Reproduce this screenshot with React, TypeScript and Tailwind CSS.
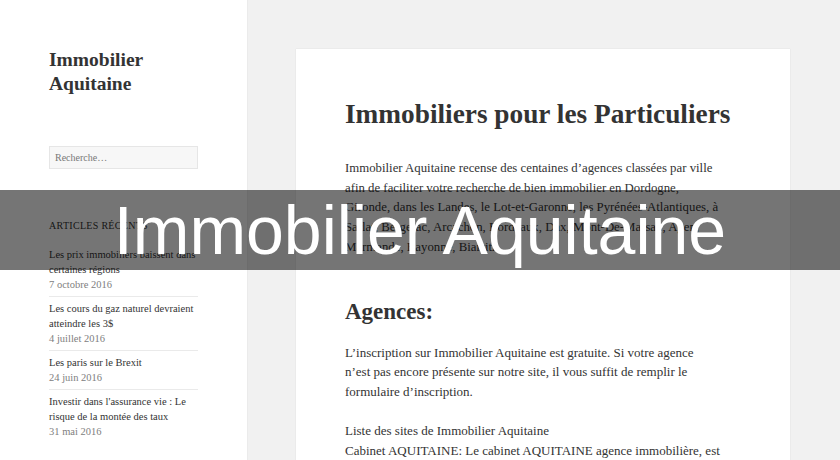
import React from "react";

const serif = { fontFamily: '"Liberation Serif", "DejaVu Serif", serif' };

const posts = [
  { t: ["Les prix immobiliers baissent dans", "certaines régions"], d: "7 octobre 2016" },
  { t: ["Les cours du gaz naturel devraient", "atteindre les 3$"], d: "4 juillet 2016" },
  { t: ["Les paris sur le Brexit"], d: "24 juin 2016" },
  { t: ["Investir dans l'assurance vie : Le", "risque de la montée des taux"], d: "31 mai 2016" },
];

export default function App() {
  return (
    <div className="relative w-[840px] h-[460px] overflow-hidden bg-[#f1f1f1] flex" style={serif}>
      <aside className="w-[247px] shrink-0 h-full bg-white shadow-[0_0_1px_rgba(0,0,0,0.15)] pl-[49px] pr-[49px] pt-[48px]">
        <div className="text-[19.5px] leading-[24px] font-bold text-[#333]">
          Immobilier
          <br />
          Aquitaine
        </div>
        <div className="mt-[50px] h-[23px] w-[149px] border border-[#e6e6e6] bg-[#f7f7f7] text-[10px] text-[#777] pl-[5px] leading-[21px]">
          Recherche…
        </div>
        <div className="mt-[50px] text-[10px] tracking-[0.3px] text-[#333] leading-[14px]">ARTICLES RÉCENTS</div>
        <ul className="mt-[14px] w-[149px]">
          {posts.map((p, i) => (
            <li key={i} className={`text-[10.5px] leading-[15px] ${i < posts.length - 1 ? "border-b border-[#eaeaea] pb-[4px] mb-[4px]" : ""}`}>
              {p.t.map((l, j) => (
                <div key={j} className="text-[#333] whitespace-nowrap">{l}</div>
              ))}
              <div className="text-[#808080]">{p.d}</div>
            </li>
          ))}
        </ul>
      </aside>
      <main className="flex-1 pl-[49px] pt-[49px]">
        <article className="w-[494px] h-[460px] bg-white shadow-[0_0_1px_rgba(0,0,0,0.15)] pl-[49px] pt-[49px]">
          <h1 className="text-[27.3px] leading-[32px] font-bold text-[#333]">Immobiliers pour les Particuliers</h1>
          <p className="mt-[29px] text-[12.8px] leading-[19.7px] text-[#333] whitespace-nowrap">
            Immobilier Aquitaine recense des centaines d’agences classées par ville
            <br />
            afin de faciliter votre recherche de bien immobilier en Dordogne,
            <br />
            Gironde, dans les Landes, le Lot-et-Garonne, les Pyrénées-Atlantiques, à
            <br />
            Sarlat, Bergerac, Arcachon, Bordeaux, Dax, Mont-De-Marsan, Agen,
            <br />
            Marmande, Bayonne, Biarritz.
          </p>
          <h2 className="mt-[40px] text-[23px] leading-[28px] font-bold text-[#333]">Agences:</h2>
          <p className="mt-[17px] text-[13px] leading-[19.7px] text-[#333] whitespace-nowrap">
            L’inscription sur Immobilier Aquitaine est gratuite. Si votre agence
            <br />
            n’est pas encore présente sur notre site, il vous suffit de remplir le
            <br />
            formulaire d’inscription.
          </p>
          <p className="mt-[19.7px] text-[13px] leading-[19.7px] text-[#333] whitespace-nowrap">
            Liste des sites de Immobilier Aquitaine
            <br />
            Cabinet AQUITAINE: Le cabinet AQUITAINE agence immobilière, est
          </p>
        </article>
      </main>
      <div className="absolute left-0 right-0 top-[190px] h-[80px] bg-black/[0.54] flex items-center justify-center">
        <span className="text-white text-[68px] leading-none" style={{ fontFamily: '"Liberation Sans", Arial, sans-serif' }}>
          Immobilier Aquitaine
        </span>
      </div>
    </div>
  );
}
